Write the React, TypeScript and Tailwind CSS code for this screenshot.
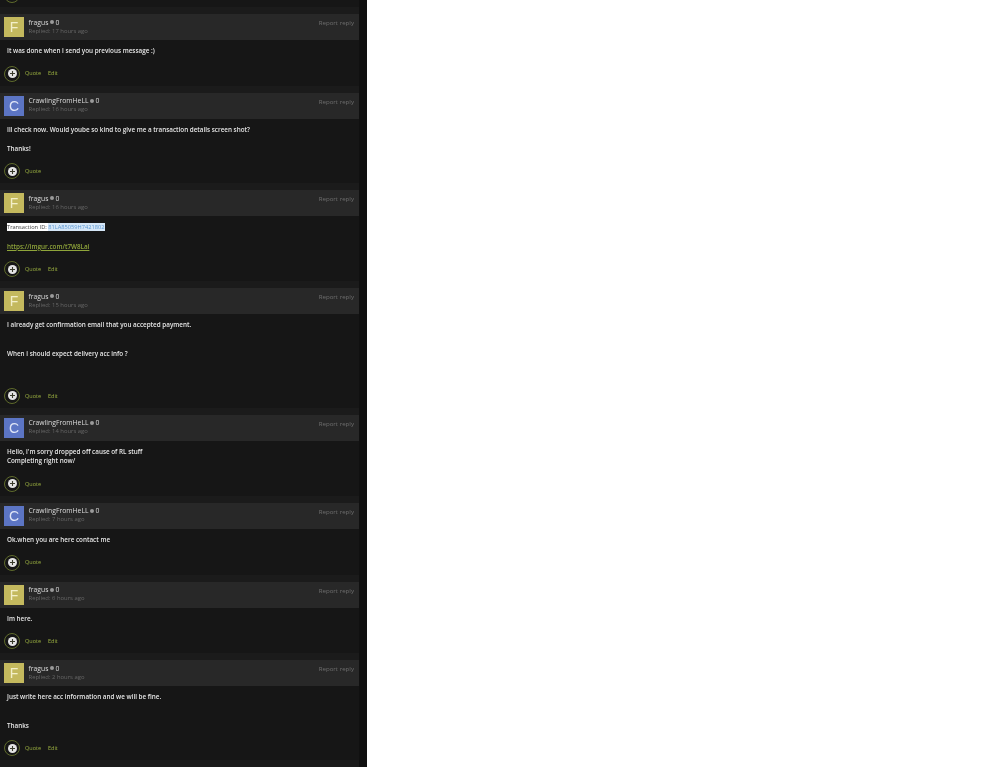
import React from 'react';

type Post = {
  author: 'fragus' | 'CrawlingFromHeLL';
  time: string;
  lines: React.ReactNode[];
  edit?: boolean;
};

const POSTS: Post[] = [
  { author: 'fragus', time: '17 hours ago', lines: ['It was done when i send you previous message :)'], edit: true },
  {
    author: 'CrawlingFromHeLL',
    time: '16 hours ago',
    lines: ['Ill check now. Would yoube so kind to give me a transaction details screen shot?', '', 'Thanks!'],
  },
  {
    author: 'fragus',
    time: '16 hours ago',
    lines: [
      <span className="bg-white text-[5.7px] font-medium text-[#444]">
        Transaction ID: <span className="bg-[#d5e6f7] text-[#5a97d2]">81LA85059H7421802</span>
      </span>,
      '',
      <span className="text-[#8fa53a] underline">https://imgur.com/t7W8Lai</span>,
    ],
    edit: true,
  },
  {
    author: 'fragus',
    time: '15 hours ago',
    lines: ['I already get confirmation email that you accepted payment.', '', '', 'When i should expect delivery acc info ?', '', ''],
    edit: true,
  },
  {
    author: 'CrawlingFromHeLL',
    time: '14 hours ago',
    lines: ["Hello, i'm sorry dropped off cause of RL stuff", 'Completing right now/'],
  },
  { author: 'CrawlingFromHeLL', time: '7 hours ago', lines: ['Ok.when you are here contact me'] },
  { author: 'fragus', time: '6 hours ago', lines: ['Im here.'], edit: true },
  {
    author: 'fragus',
    time: '2 hours ago',
    lines: ['Just write here acc information and we will be fine.', '', '', 'Thanks'],
    edit: true,
  },
];

const VoteIcon: React.FC = () => (
  <span className="flex h-4 w-4 shrink-0 items-center justify-center rounded-full border border-[#5f6b2c]">
    <span className="flex h-[9px] w-[9px] items-center justify-center rounded-full bg-[#e4e4e4]">
      <svg width="7" height="7" viewBox="0 0 7 7">
        <path d="M3.5 1v5M1 3.5h5" stroke="#3a3c2c" strokeWidth="1.1" />
      </svg>
    </span>
  </span>
);

const PostCard: React.FC<{ post: Post }> = ({ post }) => {
  const isFragus = post.author === 'fragus';
  return (
    <div className="bg-[#161616]">
      <div className="flex h-[26px] items-center bg-[#282828] pl-1 pr-[5px]">
        <div
          className={`flex h-5 w-5 shrink-0 items-center justify-center text-[14px] leading-none ${
            isFragus ? 'bg-[#c4b95e] text-[#f3efc8]' : 'bg-[#5c75c4] text-[#dfe5f6]'
          } font-['Liberation_Sans',sans-serif]`}
        >
          {isFragus ? 'F' : 'C'}
        </div>
        <div className="ml-[4.5px] flex-1 self-start pt-[3.5px]">
          <div className="flex items-center text-[6.8px] leading-[9px] text-[#dcdcdc]">
            {post.author}
            <span className="ml-[2px] h-[4px] w-[4px] rounded-full bg-[#9a9a9a]" />
            <span className="ml-[1px]">0</span>
          </div>
          <div className="text-[5.9px] leading-[8.5px] text-[#666]">Replied: {post.time}</div>
        </div>
        <div className="self-start pt-[4px] text-[6.15px] leading-[9px] text-[#6e6e6e]">Report reply</div>
      </div>
      <div className="pl-[7px] pr-2 pt-[6px] text-[6.32px] font-semibold leading-[9.6px] text-[#e6e6e6]">
        {post.lines.map((line, i) => (
          <div key={i} className="h-[9.6px] whitespace-nowrap">
            {line}
          </div>
        ))}
      </div>
      <div className="mt-[10px] flex h-5 items-center pb-1 pl-1 text-[5.5px] font-medium text-[#9bb040]">
        <VoteIcon />
        <span className="ml-[5px]">Quote</span>
        {post.edit && <span className="ml-[7px]">Edit</span>}
      </div>
    </div>
  );
};

export default function App() {
  return (
    <div className="flex h-[767px] overflow-hidden bg-white font-['Open_Sans',sans-serif]">
      <div className="w-[367px] shrink-0 bg-[#101010] blur-[0.3px]">
        <div className="flex w-[359px] flex-col gap-[7px] bg-[#1b1b1b] pb-2">
          <div className="h-[7px] overflow-hidden bg-[#161616] pl-1">
            <div className="-mt-[13px]">
              <VoteIcon />
            </div>
          </div>
          {POSTS.map((post) => (
            <PostCard key={post.author + post.time} post={post} />
          ))}
        </div>
      </div>
      <div className="flex-1" />
    </div>
  );
}
